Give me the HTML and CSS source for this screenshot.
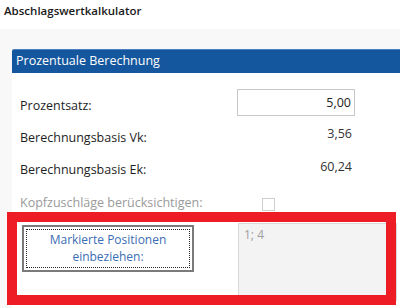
FILE: index.html
```html
<!DOCTYPE html>
<html lang="de">
<head>
    <meta charset="UTF-8">
    <title>Abschlagswertkalkulator</title>
    <link rel="stylesheet" href="styles.css">
</head>
<body>
    <div class="titlebar">Abschlagswertkalkulator</div>

    <div class="main">
        <div class="panel">
            <div class="panel-head">Prozentuale Berechnung</div>
            <div class="panel-body">
                <div class="row">
                    <label class="label">Prozentsatz:</label>
                    <input class="num-input" type="text" value="5,00">
                </div>
                <div class="row">
                    <span class="label">Berechnungsbasis Vk:</span>
                    <span class="value">3,56</span>
                </div>
                <div class="row">
                    <span class="label">Berechnungsbasis Ek:</span>
                    <span class="value value-low">60,24</span>
                </div>
                <div class="row row-check">
                    <span class="label label-disabled">Kopfzuschläge berücksichtigen:</span>
                    <span class="checkbox"></span>
                </div>
                <div class="row-positions">
                    <button class="btn-positions"><span class="btn-focus">Markierte Positionen<br>einbeziehen:</span></button>
                    <div class="positions-box">1; 4</div>
                </div>
            </div>
        </div>
        <!-- annotation frame drawn over the form -->
        <div class="highlight-frame"></div>
    </div>
</body>
</html>
```

FILE: styles.css
```css
* {
    box-sizing: border-box;
    margin: 0;
    padding: 0;
}

body {
    font-family: "Open Sans", "Noto Sans", sans-serif;
    background-color: #ffffff;
    color: #1e1e1e;
    width: 400px;
    height: 308px;
    overflow: hidden;
}

.titlebar {
    height: 29px;
    padding: 3px 0 0 4px;
    font-size: 11.5px;
    font-weight: 600;
    line-height: 16px;
    color: #1a1a1a;
}

.main {
    position: relative;
    background-color: #f8f8f8;
    height: 279px;
    padding: 20px 0 0 12px;
}

.panel {
    background-color: #ffffff;
    height: 100%;
}

.panel-head {
    height: 24px;
    background-color: #14579e;
    border-top: 1px solid #4a7fc0;
    border-radius: 2px 0 0 0;
    color: #ffffff;
    font-size: 12.5px;
    line-height: 20px;
    padding: 1px 0 0 4px;
}

.panel-body {
    padding: 16px 0 0 8px;
}

.row {
    display: flex;
    align-items: flex-start;
    height: 32px;
    font-size: 12.5px;
    line-height: 16px;
}

.label {
    width: 217px;
    padding-top: 9px;
}

.label-disabled {
    color: #9a9a9a;
    padding-top: 10px;
}

.num-input {
    width: 118px;
    height: 27px;
    border: 1px solid #c8c8c8;
    padding: 0 3px 0 0;
    text-align: right;
    font-family: inherit;
    font-size: 12.5px;
    color: #222222;
    background: #ffffff;
    outline: none;
}

.value {
    width: 115px;
    text-align: right;
    padding-top: 5px;
    color: #333333;
}

.value-low {
    padding-top: 6px;
}

.checkbox {
    width: 13px;
    height: 13px;
    margin: 13px 0 0 25px;
    border: 1px solid #cfcfcf;
    background: #ffffff;
}

.row-positions {
    display: flex;
    align-items: flex-start;
    margin-top: 6px;
}

.btn-positions {
    width: 172px;
    height: 47px;
    margin: 2px 0 0 2px;
    border: 2px solid #7a7a7a;
    background: #ffffff;
    padding: 2px;
    font-family: inherit;
    font-size: 12px;
    line-height: 17px;
    color: #3a6db3;
}

.btn-focus {
    display: flex;
    align-items: center;
    justify-content: center;
    height: 100%;
    border: 1px dotted #222222;
    padding-bottom: 2px;
}

.positions-box {
    width: 159px;
    height: 78px;
    margin-left: 44px;
    border: 1px solid #d8d8d8;
    background-color: #f3f3f3;
    padding: 3px 5px;
    font-size: 12px;
    line-height: 16px;
    color: #a0a0a0;
}

.highlight-frame {
    position: absolute;
    left: 7px;
    top: 183px;
    width: 389px;
    height: 93px;
    border: 10px solid #ee1c25;
}
```
